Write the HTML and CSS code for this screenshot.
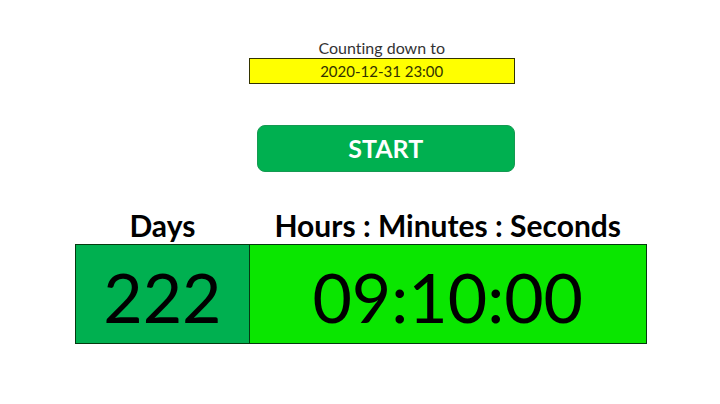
FILE: index.html
```html
<!DOCTYPE html>
<html lang="en">
<head>
<meta charset="utf-8">
<meta name="viewport" content="width=device-width, initial-scale=1">
<title>Countdown timer</title>
<link rel="stylesheet" href="styles.css">
</head>
<body>
<main class="timer">
  <form class="setup">
    <label class="setup-label" for="target">Counting down to</label>
    <input class="setup-date" id="target" type="text" value="2020-12-31 23:00">
    <button class="start" type="button">START</button>
  </form>
  <table class="clock">
    <colgroup><col class="days-col"><col></colgroup>
    <thead>
      <tr><th scope="col">Days</th><th scope="col">Hours : Minutes : Seconds</th></tr>
    </thead>
    <tbody>
      <tr><td class="days">222</td><td class="time">09:10:00</td></tr>
    </tbody>
  </table>
</main>
</body>
</html>
```
FILE: styles.css
```css
* {
  box-sizing: border-box;
}

body {
  margin: 0;
  background: #fff;
  color: #000;
  font-family: Lato, "Liberation Sans", sans-serif;
  font-variant-ligatures: none;
}

.timer {
  margin: 0 10.2% 0 10.4%;
  padding: 38px 0;
}

/* The date column starts on the line between the two clock cells. */
.setup {
  display: grid;
  grid-template-columns: 174fr 266fr 132fr;
  margin: 0 0 36px;
}

.setup > * {
  grid-column: 2;
}

.setup-label {
  color: #333;
  font-size: 16px;
  line-height: 20px;
  text-align: center;
}

.setup-date {
  width: 100%;
  height: 26px;
  padding: 0;
  border: 1px solid #333300;
  border-radius: 0;
  background: #ff0;
  color: #333300;
  font: 15px/20px Lato, "Liberation Sans", sans-serif;
  text-align: center;
}

.start {
  height: 47px;
  margin: 41px 0 0 8px;
  padding: 0 0 2px;
  border: 1px solid #159a52;
  border-radius: 8px;
  background: #00b050;
  color: #fff;
  font: bold 25px/32px Lato, "Liberation Sans", sans-serif;
  text-align: center;
}

.clock {
  width: 100%;
  table-layout: fixed;
  border-collapse: collapse;
}

.days-col {
  width: 30.5%;
}

.clock th {
  padding: 0 0 2px;
  font-size: 30px;
  line-height: 34px;
  white-space: nowrap;
}

.clock td {
  height: 99px;
  padding: 6px 0 0;
  border: 1px solid #053a10;
  font-size: 68px;
  line-height: 80px;
  text-align: center;
}

.days {
  background: #00b050;
}

.time {
  background: #0ae600;
}
```
